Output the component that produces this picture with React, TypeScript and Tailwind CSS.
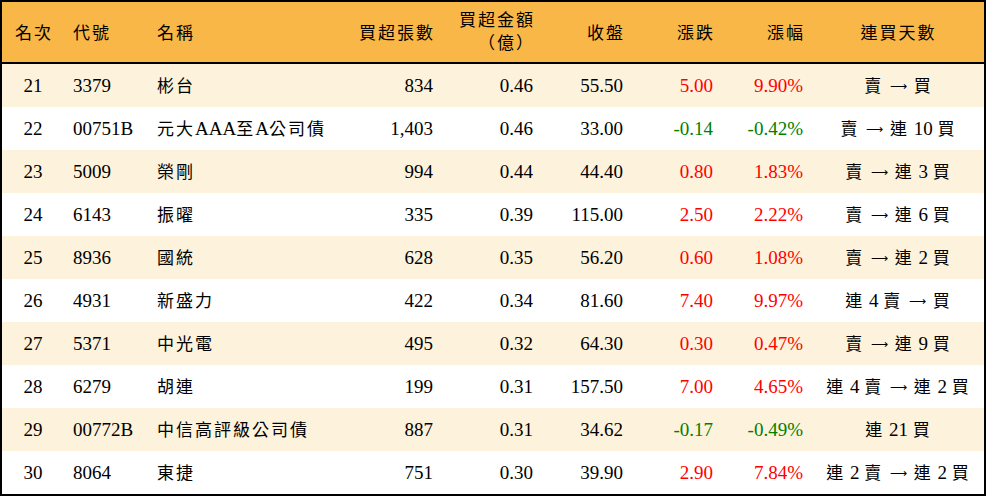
import React from "react";

const CJK = /([\u2E80-\u9FFF\uFF00-\uFFEF\u3000-\u303F]+|→)/;

function T({ s }: { s: string }) {
  const parts = s.split(CJK);
  return (
    <>
      {parts.map((p, i) =>
        i % 2 === 1 ? (
          p === "→" ? (
            <span key={i} className="text-[12px] font-extralight font-['DejaVu_Sans',sans-serif] align-[2px] mx-[2px]">
              ⟶
            </span>
          ) : (
            <span key={i} className="text-[17px] tracking-[2px] font-['Noto_Sans_CJK_TC',sans-serif]">
              {p}
            </span>
          )
        ) : (
          <React.Fragment key={i}>{p}</React.Fragment>
        )
      )}
    </>
  );
}

type Row = {
  rank: string;
  code: string;
  name: string;
  vol: string;
  amt: string;
  close: string;
  chg: string;
  pct: string;
  days: string;
};

const rows: Row[] = [
  { rank: "21", code: "3379", name: "彬台", vol: "834", amt: "0.46", close: "55.50", chg: "5.00", pct: "9.90%", days: "賣 → 買" },
  { rank: "22", code: "00751B", name: "元大AAA至A公司債", vol: "1,403", amt: "0.46", close: "33.00", chg: "-0.14", pct: "-0.42%", days: "賣 → 連 10 買" },
  { rank: "23", code: "5009", name: "榮剛", vol: "994", amt: "0.44", close: "44.40", chg: "0.80", pct: "1.83%", days: "賣 → 連 3 買" },
  { rank: "24", code: "6143", name: "振曜", vol: "335", amt: "0.39", close: "115.00", chg: "2.50", pct: "2.22%", days: "賣 → 連 6 買" },
  { rank: "25", code: "8936", name: "國統", vol: "628", amt: "0.35", close: "56.20", chg: "0.60", pct: "1.08%", days: "賣 → 連 2 買" },
  { rank: "26", code: "4931", name: "新盛力", vol: "422", amt: "0.34", close: "81.60", chg: "7.40", pct: "9.97%", days: "連 4 賣 → 買" },
  { rank: "27", code: "5371", name: "中光電", vol: "495", amt: "0.32", close: "64.30", chg: "0.30", pct: "0.47%", days: "賣 → 連 9 買" },
  { rank: "28", code: "6279", name: "胡連", vol: "199", amt: "0.31", close: "157.50", chg: "7.00", pct: "4.65%", days: "連 4 賣 → 連 2 買" },
  { rank: "29", code: "00772B", name: "中信高評級公司債", vol: "887", amt: "0.31", close: "34.62", chg: "-0.17", pct: "-0.49%", days: "連 21 買" },
  { rank: "30", code: "8064", name: "東捷", vol: "751", amt: "0.30", close: "39.90", chg: "2.90", pct: "7.84%", days: "連 2 賣 → 連 2 買" },
];

const grid =
  "grid grid-cols-[62px_83px_196px_100px_100px_90px_90px_90px_171px] items-center";

export default function App() {
  return (
    <div className="w-[986px] h-[496px] border-2 border-black bg-white text-black font-['Liberation_Serif','Noto_Sans_CJK_TC',serif] text-[19px] leading-none">
      <div className={`${grid} h-[62px] bg-[#F9B747] border-b-2 border-black`}>
        <div className="text-center pl-[2px]"><T s="名次" /></div>
        <div className="pl-[9px]"><T s="代號" /></div>
        <div className="pl-[10px]"><T s="名稱" /></div>
        <div className="text-right pr-[8px]"><T s="買超張數" /></div>
        <div className="text-right pr-[8px] leading-[22px] -mt-[2px]">
          <div><T s="買超金額" /></div>
          <div><T s="（億）" /></div>
        </div>
        <div className="text-right pr-[8px]"><T s="收盤" /></div>
        <div className="text-right pr-[8px]"><T s="漲跌" /></div>
        <div className="text-right pr-[8px]"><T s="漲幅" /></div>
        <div className="text-center"><T s="連買天數" /></div>
      </div>
      {rows.map((r, i) => {
        const neg = r.chg.startsWith("-");
        const color = neg ? "text-[#008000]" : "text-[#FF0000]";
        return (
          <div
            key={r.rank}
            className={`${grid} h-[43px] ${i % 2 === 0 ? "bg-[#FDF2DC]" : "bg-white"}`}
          >
            <div className="text-center">{r.rank}</div>
            <div className="pl-[9px]">{r.code}</div>
            <div className="pl-[10px] whitespace-nowrap"><T s={r.name} /></div>
            <div className="text-right pr-[10px]">{r.vol}</div>
            <div className="text-right pr-[10px]">{r.amt}</div>
            <div className="text-right pr-[10px]">{r.close}</div>
            <div className={`text-right pr-[10px] ${color}`}>{r.chg}</div>
            <div className={`text-right pr-[10px] ${color}`}>{r.pct}</div>
            <div className="text-center whitespace-nowrap"><T s={r.days} /></div>
          </div>
        );
      })}
    </div>
  );
}
